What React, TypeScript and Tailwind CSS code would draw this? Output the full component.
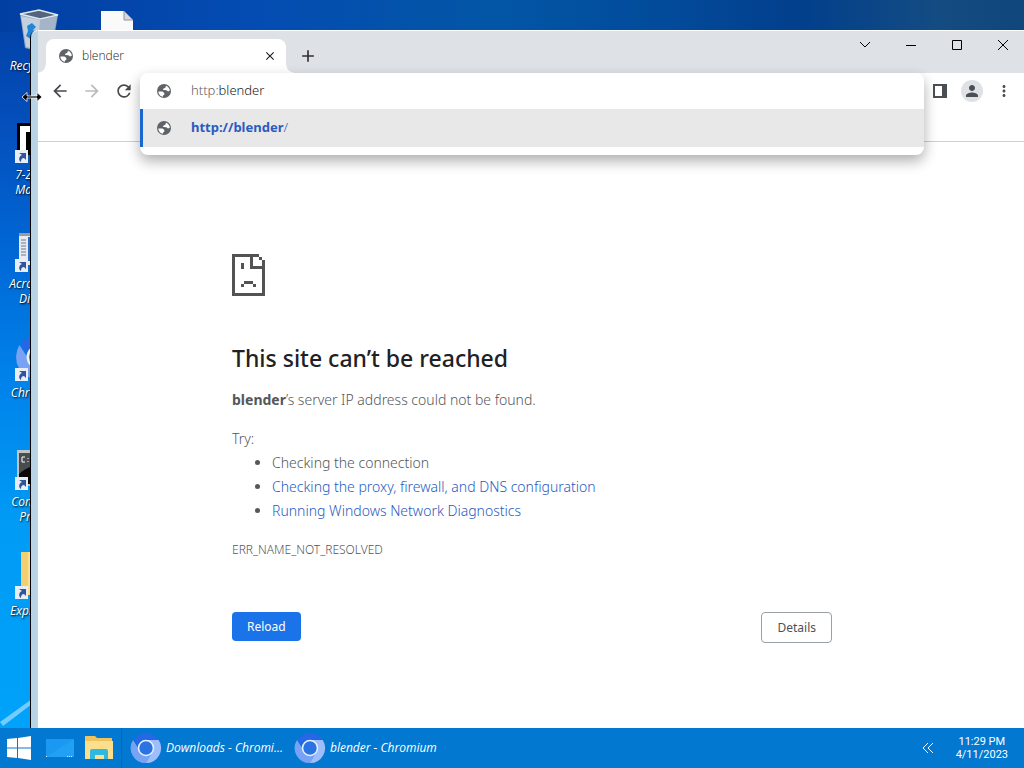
import type { ReactNode } from 'react';
import {
  MdAdd,
  MdArrowBack,
  MdArrowForward,
  MdClose,
  MdMoreVert,
  MdPerson,
  MdRefresh,
} from 'react-icons/md';

type Shortcut = {
  id: string;
  label: string;
  icon: ReactNode;
  linked: boolean;
};

const LINKS = ['Checking the proxy, firewall, and DNS configuration', 'Running Windows Network Diagnostics'];

const TASKS = ['Downloads - Chromi...', 'blender - Chromium'];

function GlobeIcon({ className }: { className: string }) {
  return (
    <svg viewBox="0 0 16 16" className={`size-4 ${className}`} aria-hidden="true">
      <circle cx="8" cy="8" r="7" fill="#5f6368" />
      <path d="M2.300 8.400H6.500L8.300 10v1.800L7 12.500v1.300C4.500 13.500 2.500 11.500 2.300 8.400z" fill="#fff" />
      <path d="M10 2.700c2.200.8 3.700 2.600 3.800 5L12 8.500 10.500 7.300 7.500 7 6.900 5.900 9.300 4.800z" fill="#fff" />
    </svg>
  );
}

function RecycleBinIcon() {
  return (
    <svg viewBox="0 0 40 42" className="-mt-1 h-[42px] w-10" aria-hidden="true">
      <path d="M1 4 20 0l19 5-6 34-14 2-13-3z" fill="#8da3bd" />
      <path d="M1 4 20 0l19 5-18 4z" fill="#53647c" stroke="#dfe7ef" strokeWidth="1.4" />
      <path d="m2 6 19 4-1 30-13-3z" fill="#c3d0df" />
      <path d="m21 10 17-4-6 32-12 2z" fill="#a5b5c9" />
      <path d="m8 16 5-3 4 4-3 3 4 5-5 5-6-4 2-5z" fill="#1f86d8" />
    </svg>
  );
}

function SevenZipIcon() {
  return (
    <svg viewBox="0 0 40 40" className="size-10" aria-hidden="true">
      <path d="M-2 0h42v32H-2z" fill="#000" />
      <path d="M1 3h36v5H16v19h-4V9H7v19H1z" fill="#fff" />
    </svg>
  );
}

function AcrobatIcon() {
  return (
    <svg viewBox="0 0 40 40" className="size-10" aria-hidden="true">
      <path d="M0 1h38v32H0z" fill="#e9e9ee" />
      <path d="M0 1h38v3H0z" fill="#9a9aa2" />
      <path d="M2 8h5M2 11h5M2 14h5M2 17h5M2 20h5M2 23h5" stroke="#6f7894" />
      <path d="M9 5h29v2H12v22H9z" fill="#1d6fd0" />
    </svg>
  );
}

function ChromiumIcon({ className }: { className: string }) {
  return (
    <svg viewBox="0 0 32 32" className={className} aria-hidden="true">
      <path d="M4 7A15 15 0 0 1 28 7H16l-7 12z" fill="#2468e6" />
      <path d="M16 8h12.700a15 15 0 0 1-13 23l7-12z" fill="#9dbdfb" />
      <path d="M3 8a15 15 0 0 0 13 23l6-11-12-1z" fill="#78a2f3" />
      <circle cx="16" cy="16" r="7.500" fill="#2b72e2" stroke="#e4f1ff" strokeWidth="1.600" />
    </svg>
  );
}

function PromptIcon() {
  return (
    <svg viewBox="0 0 40 40" className="size-10" aria-hidden="true">
      <path d="M-2 0h42v36H-2z" fill="#bfc4c9" />
      <path d="M0 3h38v31H0z" fill="#0a0a0a" />
      <path d="M0 3h38v9C20 12 6 18 0 24z" fill="#4a4d50" />
      <path d="M6 7H3v5h3M9 8v1M9 11v1" stroke="#fff" fill="none" />
    </svg>
  );
}

function FolderIcon() {
  return (
    <svg viewBox="0 0 40 40" className="size-10" aria-hidden="true">
      <path d="M2-7h34v43H2z" fill="#f4cf72" />
      <path d="M9-7h7v43H9z" fill="#fbdf92" />
    </svg>
  );
}

function ShortcutBadge() {
  return (
    <svg viewBox="0 0 13 13" className="absolute -left-1 bottom-0 size-[13px]" aria-hidden="true">
      <path d="M0 0h13v13H0z" fill="#e8eef6" />
      <path d="M4 3h7v7L9 8c-2 0-3 1-3 4-3-2-2-6 1-7z" fill="#33549a" />
    </svg>
  );
}

const SHORTCUTS: Shortcut[] = [
  { id: 'recycle', label: 'Recycle Bin', icon: <RecycleBinIcon />, linked: false },
  { id: '7zip', label: '7-Zip File Manager', icon: <SevenZipIcon />, linked: true },
  { id: 'acrobat', label: 'Acrobat DC Distiller', icon: <AcrobatIcon />, linked: true },
  { id: 'chromium', label: 'Chromium', icon: <ChromiumIcon className="-ml-1 size-12 -translate-y-2" />, linked: true },
  { id: 'prompt', label: 'Command Prompt', icon: <PromptIcon />, linked: true },
  { id: 'explorer', label: 'Explorer++', icon: <FolderIcon />, linked: true },
];

function Desktop() {
  return (
    <div className="flex">
      <ul className="w-[78px]">
        {SHORTCUTS.map((item) => (
          <li key={item.id} className="flex h-[109px] flex-col items-center gap-1 pt-[14px]">
            <span className="relative h-10 w-10 [&>svg]:max-w-none [&>svg]:overflow-visible">
              {item.icon}
              {item.linked ? <ShortcutBadge /> : null}
            </span>
            <span className="w-[70px] text-center text-xs leading-[15px] text-white italic [text-shadow:1px_1px_2px_#000]">
              {item.label}
            </span>
          </li>
        ))}
      </ul>
      <div className="flex h-[109px] w-[78px] justify-center pt-[11px]">
        <svg viewBox="0 0 32 40" className="h-10 w-8" aria-hidden="true">
          <path d="M0 0h23l9 9v31H0z" fill="#fafafa" />
          <path d="M23 0v9h9z" fill="#d6dadf" stroke="#8d949c" />
        </svg>
      </div>
    </div>
  );
}

function TabStrip() {
  return (
    <div className="flex h-[43px] items-end border-t border-white bg-[#dee1e6]">
      <span className="size-2 bg-[radial-gradient(circle_at_0_0,#dee1e6_7px,#fff_8px)]" />
      <div className="flex h-[34px] w-60 items-center rounded-t-lg bg-white pr-2 pl-3">
        <GlobeIcon className="" />
        <span className="ml-2 flex-1 text-xs font-light text-[#202124]">blender</span>
        <button type="button" aria-label="Close tab" className="p-px text-[#202124]">
          <MdClose className="size-3.5" />
        </button>
      </div>
      <span className="size-2 bg-[radial-gradient(circle_at_100%_0,#dee1e6_7px,#fff_8px)]" />
      <button type="button" aria-label="New tab" className="mb-[7px] ml-1 text-[#303134]">
        <MdAdd className="size-5" />
      </button>
      <div className="ml-auto flex gap-1 self-start text-black">
        <button type="button" aria-label="Search tabs" className="flex h-7 w-[42px] items-center justify-center">
          <svg viewBox="0 0 12 12" className="size-3" fill="none" stroke="currentColor">
            <path d="m1 3 5 5 5-5" />
          </svg>
        </button>
        <button type="button" aria-label="Minimize" className="flex h-7 w-[42px] items-center justify-center">
          <svg viewBox="0 0 12 12" className="size-3" stroke="currentColor">
            <path d="M1 6.500h10" />
          </svg>
        </button>
        <button type="button" aria-label="Maximize" className="flex h-7 w-[42px] items-center justify-center">
          <svg viewBox="0 0 12 12" className="size-3" fill="none" stroke="currentColor">
            <path d="M1.500 1.500h9v9h-9z" />
          </svg>
        </button>
        <button type="button" aria-label="Close" className="flex h-7 w-[42px] items-center justify-center">
          <svg viewBox="0 0 12 12" className="size-3" fill="none" stroke="currentColor">
            <path d="m1 1 10 10M11 1 1 11" />
          </svg>
        </button>
      </div>
    </div>
  );
}

function Omnibox() {
  return (
    <div className="absolute inset-x-0.5 top-0 z-10 overflow-hidden rounded-lg bg-white pb-2 font-['Noto_Sans',sans-serif] text-[13px] shadow-[0_6px_14px_rgba(0,0,0,0.32)]">
      <label className="flex h-9 items-center pl-4 text-[#202124]">
        <GlobeIcon className="mr-[19px]" />
        <span className="font-light text-[#5f6368]">http:</span>
        <input type="text" defaultValue="blender" aria-label="Address" className="flex-1 font-light outline-none" />
      </label>
      <a
        href="#suggestion"
        className="flex h-[38px] items-center border-l-3 border-[#1a67d2] bg-[#e8e8e8] pl-[13px] text-[#2a5bc0]"
      >
        <GlobeIcon className="mr-[19px]" />
        <b className="font-bold">http://blender</b>
        <span className="font-light">/</span>
      </a>
    </div>
  );
}

function Toolbar() {
  return (
    <div className="flex h-[69px] items-start border-b border-[#cfcfd1] bg-white pr-1.5 pl-2">
      <div className="flex gap-1 pt-1 text-[#46494d]">
        <button type="button" aria-label="Back" className="flex size-7 items-center justify-center">
          <MdArrowBack className="size-5" />
        </button>
        <button type="button" aria-label="Forward" className="flex size-7 items-center justify-center text-[#b9bbbe]">
          <MdArrowForward className="size-5" />
        </button>
        <button type="button" aria-label="Refresh" className="flex size-7 items-center justify-center">
          <MdRefresh className="size-5" />
        </button>
      </div>
      <div className="relative flex-1">
        <Omnibox />
      </div>
      <div className="flex gap-1 pt-1 text-[#4b4e52]">
        <button type="button" aria-label="Side panel" className="flex size-7 items-center justify-center">
          <svg viewBox="0 0 14 14" className="size-3.5">
            <path d="M0 0h14v14H0zM2 2v10h7V2z" fill="currentColor" fillRule="evenodd" />
          </svg>
        </button>
        <button type="button" aria-label="Profile" className="flex size-7 items-center justify-center">
          <span className="flex size-[22px] items-center justify-center rounded-full bg-[#dee1e6]">
            <MdPerson className="size-[18px]" />
          </span>
        </button>
        <button type="button" aria-label="Menu" className="flex size-7 items-center justify-center">
          <MdMoreVert className="size-[18px]" />
        </button>
      </div>
    </div>
  );
}

function SadPageIcon() {
  return (
    <svg viewBox="0 0 11 14" className="h-[42px] w-[33px]" fill="#535353" shapeRendering="crispEdges" aria-hidden="true">
      <path d="M0 0h9v1H7v3h3V2h1v12H0zM1 1v12h9V5H6V1zM9 1h1v1H9z" fillRule="evenodd" />
      <path d="M3 3h1v2H3zM4 9h3v1H4zM3 10h1v1H3zM7 10h1v1H7z" />
    </svg>
  );
}

function ErrorPage() {
  return (
    <main className="pl-0.5">
      <div className="mx-auto w-full max-w-[600px] pt-28 font-['Noto_Sans',sans-serif] text-sm leading-6 font-light text-[#54575c]">
        <SadPageIcon />
        <h1 className="mt-12 text-[23px] leading-7 font-medium text-[#202124]">This site can’t be reached</h1>
        <p className="mt-4">
          <strong className="font-bold">blender</strong>’s server IP address could not be found.
        </p>
        <p className="mt-[15px]">Try:</p>
        <ul className="list-disc pl-10">
          <li>Checking the connection</li>
          {LINKS.map((link) => (
            <li key={link}>
              <a href="#help" className="text-[#2a5bc0]">
                {link}
              </a>
            </li>
          ))}
        </ul>
        <p className="mt-[15px] text-xs leading-6">ERR_NAME_NOT_RESOLVED</p>
        <div className="mt-[50px] flex items-start justify-between text-xs leading-[21px] font-normal">
          <button type="button" className="rounded bg-[#1a73e8] px-[15px] py-1 text-white">
            Reload
          </button>
          <button type="button" className="rounded border border-[#9aa0a6] px-[15px] py-1 text-[#4d5156]">
            Details
          </button>
        </div>
      </div>
    </main>
  );
}

function Taskbar() {
  return (
    <footer className="relative z-20 flex h-10 items-center bg-[#0278d0] text-white">
      <button type="button" aria-label="Start" className="ml-[7px]">
        <svg viewBox="0 0 24 24" className="size-6" fill="#fff">
          <path d="m0 3 10-1v9.500H0zM11 2l13-2v11.500H11zM0 12.500h10V22L0 21zM11 12.500h13V24l-13-2z" />
        </svg>
      </button>
      <button type="button" aria-label="Show desktop" className="ml-[15px]">
        <svg viewBox="0 0 28 20" className="h-5 w-7">
          <path d="M0 1h28v18H0z" fill="#1a98f2" />
          <path d="M0 19 28 1v18z" fill="#22a0f4" />
          <path d="M0 18.500h2M21 18.500h6" stroke="#d7f0ff" strokeDasharray="1 1" />
        </svg>
      </button>
      <button type="button" aria-label="File explorer" className="ml-[11px]">
        <svg viewBox="0 0 28 24" className="h-6 w-7">
          <path d="M0 0h10l2 2h15v8H0z" fill="#f0c35e" />
          <path d="M0 5h28v18H0z" fill="#fbdf8c" />
          <path d="M5 15q0-2 2-2h14q2 0 2 2v8h-4v-4h-9v4H5z" fill="#2fb8e0" />
        </svg>
      </button>
      <div className="ml-2 flex border-l border-[#1a5fae] pl-2">
        {TASKS.map((task) => (
          <button key={task} type="button" className="flex h-10 w-[164px] items-center gap-1 text-left">
            <ChromiumIcon className="size-8 shrink-0" />
            <span className="text-xs whitespace-nowrap italic">{task}</span>
          </button>
        ))}
      </div>
      <button type="button" aria-label="Show hidden icons" className="ml-auto">
        <svg viewBox="0 0 12 12" className="size-3" fill="none" stroke="#fff">
          <path d="M6 1 1 6l5 5M11 1 6 6l5 5" />
        </svg>
      </button>
      <div className="mr-4 ml-[22px] text-center font-['Roboto',sans-serif] text-[11px] leading-[13px]">
        <p>11:29 PM</p>
        <p>4/11/2023</p>
      </div>
    </footer>
  );
}

function ResizeCursor() {
  return (
    <svg viewBox="0 0 20 10" className="absolute top-[92px] left-[22px] z-30 h-2.5 w-5" aria-hidden="true">
      <path
        d="M0 5 5 .5V4h10V.5L20 5l-5 4.500V6H5v3.500z"
        fill="#000"
        stroke="#fff"
        strokeWidth=".8"
      />
    </svg>
  );
}

export default function App() {
  return (
    <div className="flex h-screen flex-col overflow-hidden font-['Open_Sans',sans-serif]">
      <div className="relative flex-1 bg-[linear-gradient(#023fa3,#0450bd_18%,#0068d6_35%,#0082ea_52%,#009bf5_72%,#00a2fa)]">
        <div className="absolute inset-x-0 top-0 h-8 bg-[linear-gradient(90deg,#023fa3,#044cb2_25%,#0356a6_48%,#024a9a_66%,#023f8c_78%,#144c82_92%,#0f477c)]" />
        <svg viewBox="0 0 32 32" className="absolute bottom-0 left-0 size-8" aria-hidden="true">
          <path d="M0 26 32 3v5L3 30z" fill="#8fd8ff" opacity=".8" />
        </svg>
        <div className="absolute inset-0">
          <Desktop />
        </div>
        <section className="absolute top-[30px] right-0 bottom-0 left-[30px] flex rounded-tl-lg border-l border-black bg-[#b9d3e6]">
          <div className="w-[7px] shrink-0 rounded-tl-lg border-t border-r border-[#c9d0e0] border-t-white" />
          <div className="flex min-w-0 flex-1 flex-col bg-white">
            <TabStrip />
            <Toolbar />
            <ErrorPage />
          </div>
        </section>
        <ResizeCursor />
      </div>
      <Taskbar />
    </div>
  );
}
